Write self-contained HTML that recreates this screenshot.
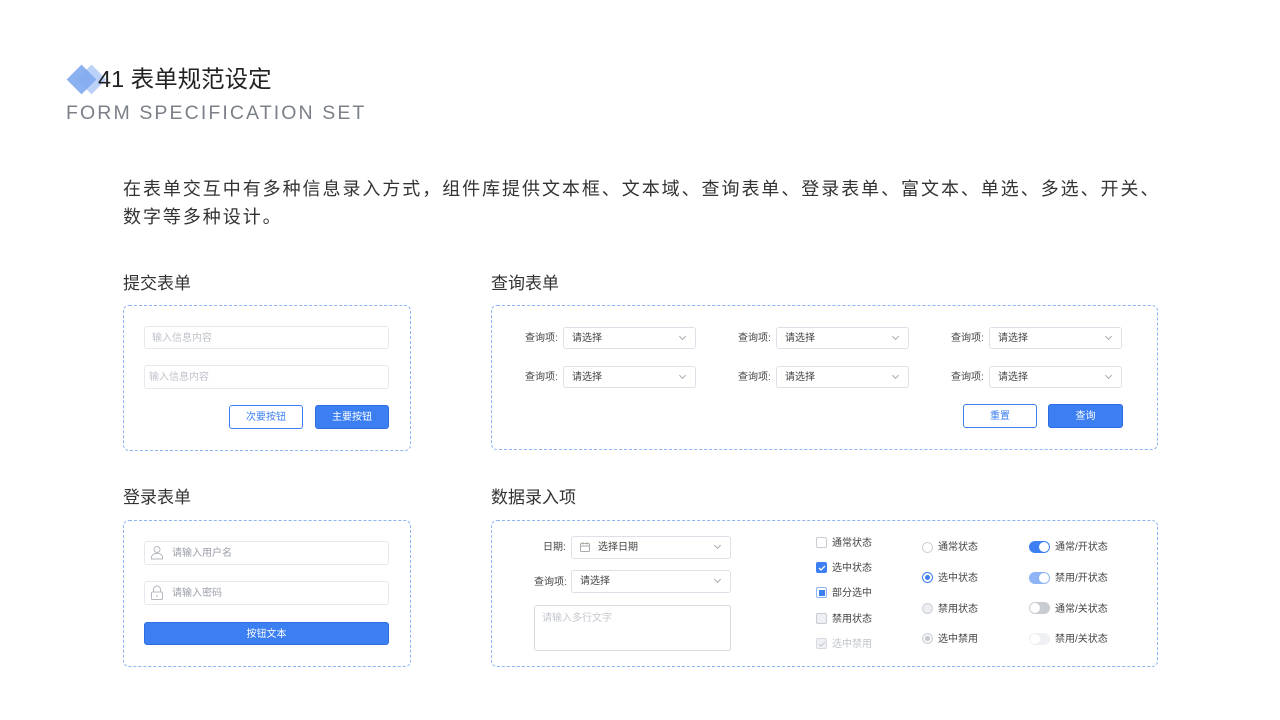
<!DOCTYPE html>
<html><head><meta charset="utf-8"><style>
*{margin:0;padding:0;box-sizing:border-box}
body{width:1280px;height:720px;background:#fff;position:relative;overflow:hidden;font-family:"Liberation Sans","Noto Sans CJK SC",sans-serif;color:#333}
.a{position:absolute}
.box{position:absolute;border:1px dashed #8fb4f5;border-radius:6px}
.h{position:absolute;font-size:17px;color:#333;line-height:20px;top:0}
.in{position:absolute;border:1px solid #e6e9ee;border-radius:3px;font-size:10px;color:#bfc3ca;line-height:19px;padding-top:2px;padding-left:7px;background:#fff}
.sel{position:absolute;border:1px solid #dde0e6;border-radius:3px;font-size:10px;color:#444;line-height:18px;padding-top:2px;padding-left:8px;background:#fff}
.sel:after{content:"";position:absolute;right:10px;top:6px;width:4px;height:4px;border-right:1px solid #aaa;border-bottom:1px solid #aaa;transform:rotate(45deg)}
.lb{position:absolute;font-size:10px;color:#444;line-height:12px;margin-top:1px}
.btn{position:absolute;border-radius:3px;font-size:10px;text-align:center;line-height:19px;padding-top:2px}
.pb{background:#3b7ff2;color:#fff;border:1px solid #2f6de0}
.sb{background:#fff;color:#3b7ff2;border:1px solid #3b7ff2}
.cb{position:absolute;width:11px;height:11px;border:1px solid #c8ccd3;border-radius:2px;background:#fff}
.rd{position:absolute;width:11px;height:11px;border:1px solid #ccd0d6;border-radius:50%;background:#fff}
.tg{position:absolute;width:21px;height:12px;border-radius:6px}
.tg i{position:absolute;top:1px;width:10px;height:10px;border-radius:50%;background:#fff}
</style></head><body>
<svg class="a" style="left:62px;top:61px" width="50" height="38"><rect x="19" y="8" width="21" height="21" transform="rotate(45 29.5 18.5)" fill="#bcd1f8"/><rect x="9" y="8" width="21" height="21" transform="rotate(45 19.5 18.5)" fill="#7fa8ee" opacity=".9"/></svg>
<div class="a" style="left:98px;top:65px;font-size:23.5px;color:#222;line-height:28px">41 表单规范设定</div>
<div class="a" style="left:66px;top:101px;font-size:19.5px;color:#7b8089;letter-spacing:2.1px;line-height:24px">FORM SPECIFICATION SET</div>
<div class="a" style="left:123px;top:175px;width:1100px;font-size:18px;letter-spacing:1.95px;line-height:28px;color:#333">在表单交互中有多种信息录入方式，组件库提供文本框、文本域、查询表单、登录表单、富文本、单选、多选、开关、<br>数字等多种设计。</div>

<div class="h" style="left:123px;top:274px">提交表单</div>
<div class="h" style="left:491px;top:274px">查询表单</div>
<div class="h" style="left:123px;top:488px">登录表单</div>
<div class="h" style="left:491px;top:488px">数据录入项</div>

<div class="box" style="left:123px;top:305px;width:288px;height:146px"></div>
<div class="in" style="left:144px;top:326px;width:245px;height:23px">输入信息内容</div>
<div class="in" style="left:144px;top:365px;width:245px;height:24px;padding-left:4px">输入信息内容</div>
<div class="btn sb" style="left:229px;top:405px;width:74px;height:24px">次要按钮</div>
<div class="btn pb" style="left:315px;top:405px;width:74px;height:24px">主要按钮</div>

<div class="box" style="left:491px;top:305px;width:667px;height:145px"></div>
<div class="lb" style="left:525px;top:332px">查询项:</div><div class="sel" style="left:563px;top:327px;width:133px;height:22px">请选择</div>
<div class="lb" style="left:738px;top:332px">查询项:</div><div class="sel" style="left:776px;top:327px;width:133px;height:22px">请选择</div>
<div class="lb" style="left:951px;top:332px">查询项:</div><div class="sel" style="left:989px;top:327px;width:133px;height:22px">请选择</div>
<div class="lb" style="left:525px;top:371px">查询项:</div><div class="sel" style="left:563px;top:366px;width:133px;height:22px">请选择</div>
<div class="lb" style="left:738px;top:371px">查询项:</div><div class="sel" style="left:776px;top:366px;width:133px;height:22px">请选择</div>
<div class="lb" style="left:951px;top:371px">查询项:</div><div class="sel" style="left:989px;top:366px;width:133px;height:22px">请选择</div>
<div class="btn sb" style="left:963px;top:404px;width:74px;height:24px">重置</div>
<div class="btn pb" style="left:1048px;top:404px;width:75px;height:24px">查询</div>

<div class="box" style="left:123px;top:520px;width:288px;height:147px"></div>
<div class="in" style="left:144px;top:541px;width:245px;height:24px;padding-left:27px;color:#9a9fa8">请输入用户名</div>
<svg class="a" style="left:150px;top:545px" width="14" height="15" fill="none" stroke="#b5b9c0" stroke-width="1"><circle cx="7" cy="4.5" r="3"/><path d="M1.5 14v-1.5a4 4 0 0 1 4-4h3a4 4 0 0 1 4 4V14z"/></svg>
<div class="in" style="left:144px;top:581px;width:245px;height:24px;padding-left:27px;color:#9a9fa8">请输入密码</div>
<svg class="a" style="left:150px;top:585px" width="14" height="15" fill="none" stroke="#b5b9c0" stroke-width="1"><path d="M3.5 7V4.5a3.5 3.5 0 0 1 7 0V7"/><rect x="1.5" y="7" width="11" height="7.5" rx="1"/><path d="M7 10v2"/></svg>
<div class="btn pb" style="left:144px;top:622px;width:245px;height:23px">按钮文本</div>

<div class="box" style="left:491px;top:520px;width:667px;height:147px"></div>
<div class="lb" style="left:543px;top:541px">日期:</div>
<div class="sel" style="left:571px;top:536px;width:160px;height:23px;padding-left:26px">选择日期</div>
<svg class="a" style="left:580px;top:542px" width="10" height="10" fill="none" stroke="#aaa" stroke-width="1"><rect x=".5" y="1.5" width="9" height="8" rx="1"/><path d="M.5 4h9M3 0v2.5M7 0v2.5"/></svg>
<div class="lb" style="left:534px;top:576px">查询项:</div>
<div class="sel" style="left:571px;top:570px;width:160px;height:23px">请选择</div>
<div class="in" style="left:534px;top:605px;width:197px;height:46px;line-height:22px;border-color:#d8dbe1;color:#c4c8ce">请输入多行文字</div>

<div class="cb" style="left:816px;top:537px"></div><div class="lb" style="left:832px;top:537px">通常状态</div>
<div class="cb" style="left:816px;top:562px;background:#3b7ff2;border-color:#3b7ff2"></div>
<svg class="a" style="left:818px;top:564px" width="8" height="8"><path d="M1 4l2 2 4-4" stroke="#fff" stroke-width="1.3" fill="none"/></svg>
<div class="lb" style="left:832px;top:562px">选中状态</div>
<div class="cb" style="left:816px;top:587px;border-color:#8fb4f5"></div><div class="a" style="left:819px;top:590px;width:6px;height:6px;background:#3b7ff2"></div>
<div class="lb" style="left:832px;top:587px">部分选中</div>
<div class="cb" style="left:816px;top:613px;background:#eef0f3"></div><div class="lb" style="left:832px;top:613px">禁用状态</div>
<div class="cb" style="left:816px;top:638px;background:#eef0f3;border-color:#d6d9de"></div>
<svg class="a" style="left:818px;top:640px" width="8" height="8"><path d="M1 4l2 2 4-4" stroke="#c8ccd2" stroke-width="1.2" fill="none"/></svg>
<div class="lb" style="left:832px;top:638px;color:#c0c4ca">选中禁用</div>

<div class="rd" style="left:922px;top:542px"></div><div class="lb" style="left:938px;top:541px">通常状态</div>
<div class="rd" style="left:922px;top:572px;border-color:#3b7ff2"></div><div class="a" style="left:925px;top:575px;width:5px;height:5px;border-radius:50%;background:#3b7ff2"></div><div class="lb" style="left:938px;top:572px">选中状态</div>
<div class="rd" style="left:922px;top:603px;background:#eceef1"></div><div class="lb" style="left:938px;top:603px">禁用状态</div>
<div class="rd" style="left:922px;top:633px;background:#f4f5f7"></div><div class="a" style="left:925px;top:636px;width:5px;height:5px;border-radius:50%;background:#c4c8ce"></div><div class="lb" style="left:938px;top:633px">选中禁用</div>

<div class="tg" style="left:1029px;top:541px;background:#3b7ff2"><i style="right:1px"></i></div><div class="lb" style="left:1055px;top:541px">通常/开状态</div>
<div class="tg" style="left:1029px;top:572px;background:#8fb4f5"><i style="right:1px"></i></div><div class="lb" style="left:1055px;top:572px">禁用/开状态</div>
<div class="tg" style="left:1029px;top:602px;background:#c9ccd2"><i style="left:1px"></i></div><div class="lb" style="left:1055px;top:603px">通常/关状态</div>
<div class="tg" style="left:1029px;top:633px;background:#eef0f3"><i style="left:1px"></i></div><div class="lb" style="left:1055px;top:633px">禁用/关状态</div>
</body></html>
